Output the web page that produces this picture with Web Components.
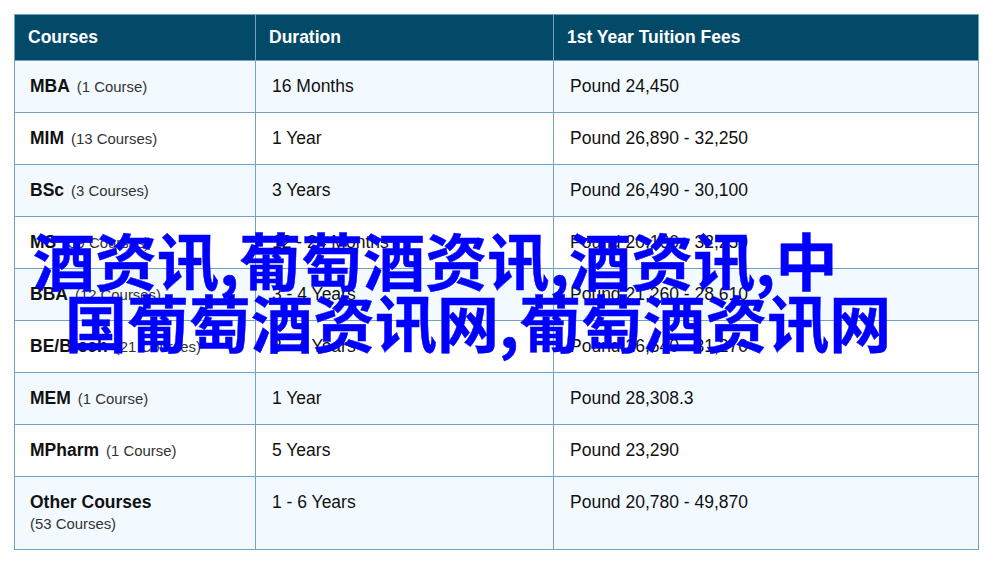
<!DOCTYPE html>
<html lang="en">
<head>
<meta charset="utf-8">
<title>Courses</title>
<style>
html,body {margin:0;background:#fff;}
body {font-family:"Liberation Sans",Arial,sans-serif;color:#111;padding:14px;width:965px;}
</style>
</head>
<body>
<fees-page>
    <course-table>
        <course-row head><span slot="name">Courses</span><span slot="duration">Duration</span><span slot="fees">1st Year Tuition Fees</span></course-row>
        <course-row shade><span slot="name">MBA</span><span slot="count">(1 Course)</span><span slot="duration">16 Months</span><span slot="fees">Pound 24,450</span></course-row>
        <course-row><span slot="name">MIM</span><span slot="count">(13 Courses)</span><span slot="duration">1 Year</span><span slot="fees">Pound 26,890 - 32,250</span></course-row>
        <course-row shade><span slot="name">BSc</span><span slot="count">(3 Courses)</span><span slot="duration">3 Years</span><span slot="fees">Pound 26,490 - 30,100</span></course-row>
        <course-row><span slot="name">MS</span><span slot="count">(59 Courses)</span><span slot="duration">12 - 24 Months</span><span slot="fees">Pound 20,160 - 32,250</span></course-row>
        <course-row shade><span slot="name">BBA</span><span slot="count">(12 Courses)</span><span slot="duration">3 - 4 Years</span><span slot="fees">Pound 21,260 - 28,610</span></course-row>
        <course-row><span slot="name">BE/Btech</span><span slot="count">(21 Courses)</span><span slot="duration">3 - 4 Years</span><span slot="fees">Pound 26,640 - 31,270</span></course-row>
        <course-row shade><span slot="name">MEM</span><span slot="count">(1 Course)</span><span slot="duration">1 Year</span><span slot="fees">Pound 28,308.3</span></course-row>
        <course-row><span slot="name">MPharm</span><span slot="count">(1 Course)</span><span slot="duration">5 Years</span><span slot="fees">Pound 23,290</span></course-row>
        <course-row shade tall><span slot="name">Other Courses</span><span slot="count">(53 Courses)</span><span slot="duration">1 - 6 Years</span><span slot="fees">Pound 20,780 - 49,870</span></course-row>
    </course-table>
    <title-overlay slot="over"><span>酒资讯,葡萄酒资讯,酒资讯,中</span><span class="second">国葡萄酒资讯网,葡萄酒资讯网</span></title-overlay>
</fees-page>
<script>
customElements.define('fees-page', class extends HTMLElement {
    constructor() {
        super();
        this.attachShadow({ mode: 'open' }).innerHTML = `
        <style>
        :host {display:block;position:relative;}
        </style>
        <slot></slot>
        <slot name=over></slot>`;
    }
});
customElements.define('course-table', class extends HTMLElement {
    constructor() {
        super();
        this.attachShadow({ mode: 'open' }).innerHTML = `
        <style>
        :host {
            display:flex;flex-direction:column;
            border:solid #6fa3bf;border-width:1px 1px 0;
        }
        </style>
        <slot></slot>`;
    }
});
customElements.define('course-row', class extends HTMLElement {
    constructor() {
        super();
        this.attachShadow({ mode: 'open' }).innerHTML = `
        <style>
        :host {
            display:grid;grid-template-columns:240px 298px 1fr;
            height:52px;box-sizing:border-box;
            border-bottom:1px solid #6fa3bf;
            font-size:17.5px;line-height:22px;color:#111;
        }
        :host([shade]) {background:#f3faff;}
        :host([head]) {height:46px;background:#034a68;color:#fff;font-weight:bold;}
        :host([tall]) {height:73px;}
        .cell {padding:14px 16px 0;}
        .name {padding-left:15px;}
        .cell + .cell {border-left:1px solid #6fa3bf;}
        :host([head]) .cell {padding:11px 13px 0;}
        .name ::slotted([slot=name]) {font-weight:bold;margin-right:7px;}
        .name ::slotted([slot=count]) {font-size:14.9px;color:#333;}
        :host([tall]) .name ::slotted(*) {display:block;}
        </style>
        <div class="cell name"><slot name=name></slot><slot name=count></slot></div>
        <div class=cell><slot name=duration></slot></div>
        <div class=cell><slot name=fees></slot></div>`;
    }
});
customElements.define('title-overlay', class extends HTMLElement {
    constructor() {
        super();
        this.attachShadow({ mode: 'open' }).innerHTML = `
        <style>
        :host {
            position:absolute;left:19px;top:214px;
            white-space:nowrap;
            font:bold 62px/62px "Noto Sans CJK SC","Liberation Sans",sans-serif;
            -webkit-text-stroke:.5px #0000ff;
            color:#0000ff;
        }
        ::slotted(span) {display:block;}
        ::slotted(.second) {margin-left:32px;}
        </style>
        <slot></slot>`;
    }
});
</script>
</body>
</html>
